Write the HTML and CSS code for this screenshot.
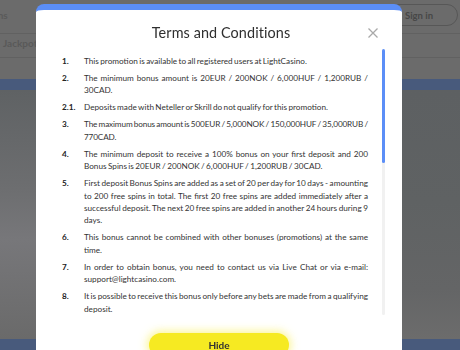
FILE: index.html
```html
<!DOCTYPE html>
<html>
<head>
<meta charset="utf-8">
<link rel="stylesheet" href="styles.css">
</head>
<body>
<div class="page">
  <header class="topbar">
    <span class="nav-cut">Promotions</span>
    <span class="signin">Sign in</span>
  </header>
  <nav class="navrow"><span class="nav-item">Jackpot</span></nav>
  <div class="navrow2"></div>
  <div class="band"></div>
  <div class="hero">
    <div class="hero-left"></div>
    <div class="hero-right"></div>
  </div>
  <div class="band"></div>
</div>

<div class="modal">
  <div class="modal-head">
    <h2 class="modal-title">Terms and Conditions</h2>
    <span class="close" aria-label="Close">
      <svg width="10" height="10" viewBox="0 0 10 10"><path d="M0.5 0.5L9.5 9.5M9.5 0.5L0.5 9.5" stroke="#a9a9a9" stroke-width="1.3" fill="none"/></svg>
    </span>
  </div>
  <div class="scroll-area">
    <ol class="terms">
      <li><span class="num">1.</span><p>This promotion is available to all registered users at LightCasino.</p></li>
      <li><span class="num">2.</span><p>The minimum bonus amount is 20EUR / 200NOK / 6,000HUF / 1,200RUB / 30CAD.</p></li>
      <li><span class="num">2.1.</span><p>Deposits made with Neteller or Skrill do not qualify for this promotion.</p></li>
      <li><span class="num">3.</span><p class="tight">The maximum bonus amount is 500EUR / 5,000NOK / 150,000HUF / 35,000RUB / 770CAD.</p></li>
      <li><span class="num">4.</span><p>The minimum deposit to receive a 100% bonus on your first deposit and 200 Bonus Spins is 20EUR / 200NOK / 6,000HUF / 1,200RUB / 30CAD.</p></li>
      <li><span class="num">5.</span><p>First deposit Bonus Spins are added as a set of 20 per day for 10 days - amounting to 200 free spins in total. The first 20 free spins are added immediately after a successful deposit. The next 20 free spins are added in another 24 hours during 9 days.</p></li>
      <li><span class="num">6.</span><p>This bonus cannot be combined with other bonuses (promotions) at the same time.</p></li>
      <li><span class="num">7.</span><p>In order to obtain bonus, you need to contact us via Live Chat or via e-mail: support@lightcasino.com.</p></li>
      <li><span class="num">8.</span><p>It is possible to receive this bonus only before any bets are made from a qualifying deposit.</p></li>
    </ol>
    <div class="track"><div class="thumb"></div></div>
  </div>
  <div class="actions">
    <button class="hide-btn">Hide</button>
  </div>
</div>
</body>
</html>
```

FILE: styles.css
```css
* { box-sizing: border-box; }
html, body { margin: 0; padding: 0; }
body {
  width: 460px;
  height: 350px;
  overflow: hidden;
  background: #6a6a6a;
  font-family: Lato, "Open Sans", sans-serif;
}
.page {
  display: flex;
  flex-direction: column;
  height: 350px;
}
.topbar {
  height: 37px;
  background: #6b6b6b;
  border-bottom: 1px solid #616161;
  display: flex;
  align-items: center;
  justify-content: space-between;
  overflow: hidden;
}
.nav-cut {
  margin-left: -44px;
  margin-top: -4px;
  font-size: 10px;
  font-weight: 700;
  color: #5a5a5a;
}
.signin {
  margin-top: -3px;
  margin-right: 2px;
  width: 70px;
  height: 22px;
  border: 1px solid #575757;
  border-radius: 11px;
  display: flex;
  align-items: center;
  justify-content: flex-end;
  padding-right: 24px;
  font-size: 9.5px;
  font-weight: 700;
  color: #474747;
}
.navrow {
  height: 25px;
  background: #6b6b6b;
  border-bottom: 1px solid #616161;
  display: flex;
  align-items: center;
  padding-left: 3px;
}
.nav-item {
  font-size: 10px;
  font-weight: 700;
  color: #595959;
  margin-top: -5px;
}
.navrow2 {
  height: 23px;
  background: #6b6b6b;
}
.band {
  height: 11px;
  background: #485a7c;
  flex: none;
}
.hero {
  height: 249px;
  flex: none;
  display: flex;
  justify-content: space-between;
  background: linear-gradient(180deg, #626466 0%, #666869 60%, #6b6b6b 100%);
}
.hero-left {
  width: 36px;
  background: linear-gradient(180deg, #5f6264 0%, #6d6e70 40%, #77777a 60%, #6a6a6a 100%);
}
.hero-right {
  width: 58px;
  background: linear-gradient(180deg, #5d6062 0%, #5f6263 45%, #646566 80%, #6c6c6c 100%);
}

.modal {
  position: fixed;
  left: 36px;
  top: 4px;
  width: 366px;
  height: 370px;
  background: #fff;
  border-top: 6px solid #5b8ef7;
  border-radius: 8px 8px 0 0;
  display: flex;
  flex-direction: column;
}
.modal-head {
  position: relative;
  height: 39px;
  display: flex;
  justify-content: center;
  padding-top: 13px;
}
.modal-title {
  margin: 0;
  font-size: 14.4px;
  line-height: 20px;
  font-weight: 400;
  color: #2f2f2f;
  letter-spacing: 0.1px;
  padding-left: 4px;
}
.close {
  position: absolute;
  right: 24px;
  top: 18px;
  width: 10px;
  height: 10px;
  display: flex;
}
.scroll-area {
  height: 266px;
  display: flex;
  padding-left: 26px;
  padding-right: 17px;
  overflow: hidden;
}
.terms {
  list-style: none;
  margin: 0;
  padding: 6px 0 0 0;
  flex: 1;
  display: flex;
  flex-direction: column;
  gap: 4.6px;
}
.terms li {
  display: grid;
  grid-template-columns: 22px 1fr;
  font-size: 8.2px;
  line-height: 12.4px;
  color: #333;
}
.num {
  font-weight: 700;
  color: #222;
}
.terms p {
  margin: 0;
  text-align: justify;
  word-spacing: -0.7px;
}
.terms p.tight {
  letter-spacing: -0.13px;
  word-spacing: -0.9px;
}
.track {
  width: 3px;
  margin-left: 14px;
  background: #f1f1f1;
  border-radius: 2px;
  flex: none;
}
.thumb {
  height: 114px;
  background: #5b8ef7;
  border-radius: 2px;
}
.actions {
  display: flex;
  justify-content: center;
  padding-top: 18px;
}
.hide-btn {
  width: 140px;
  height: 24px;
  border: none;
  border-radius: 12px;
  background: #f6ea22;
  box-shadow: 0 0 8px 2px rgba(247, 236, 60, 0.55);
  font-family: Lato, sans-serif;
  font-size: 10px;
  font-weight: 700;
  color: #333;
  padding: 0;
}
```
